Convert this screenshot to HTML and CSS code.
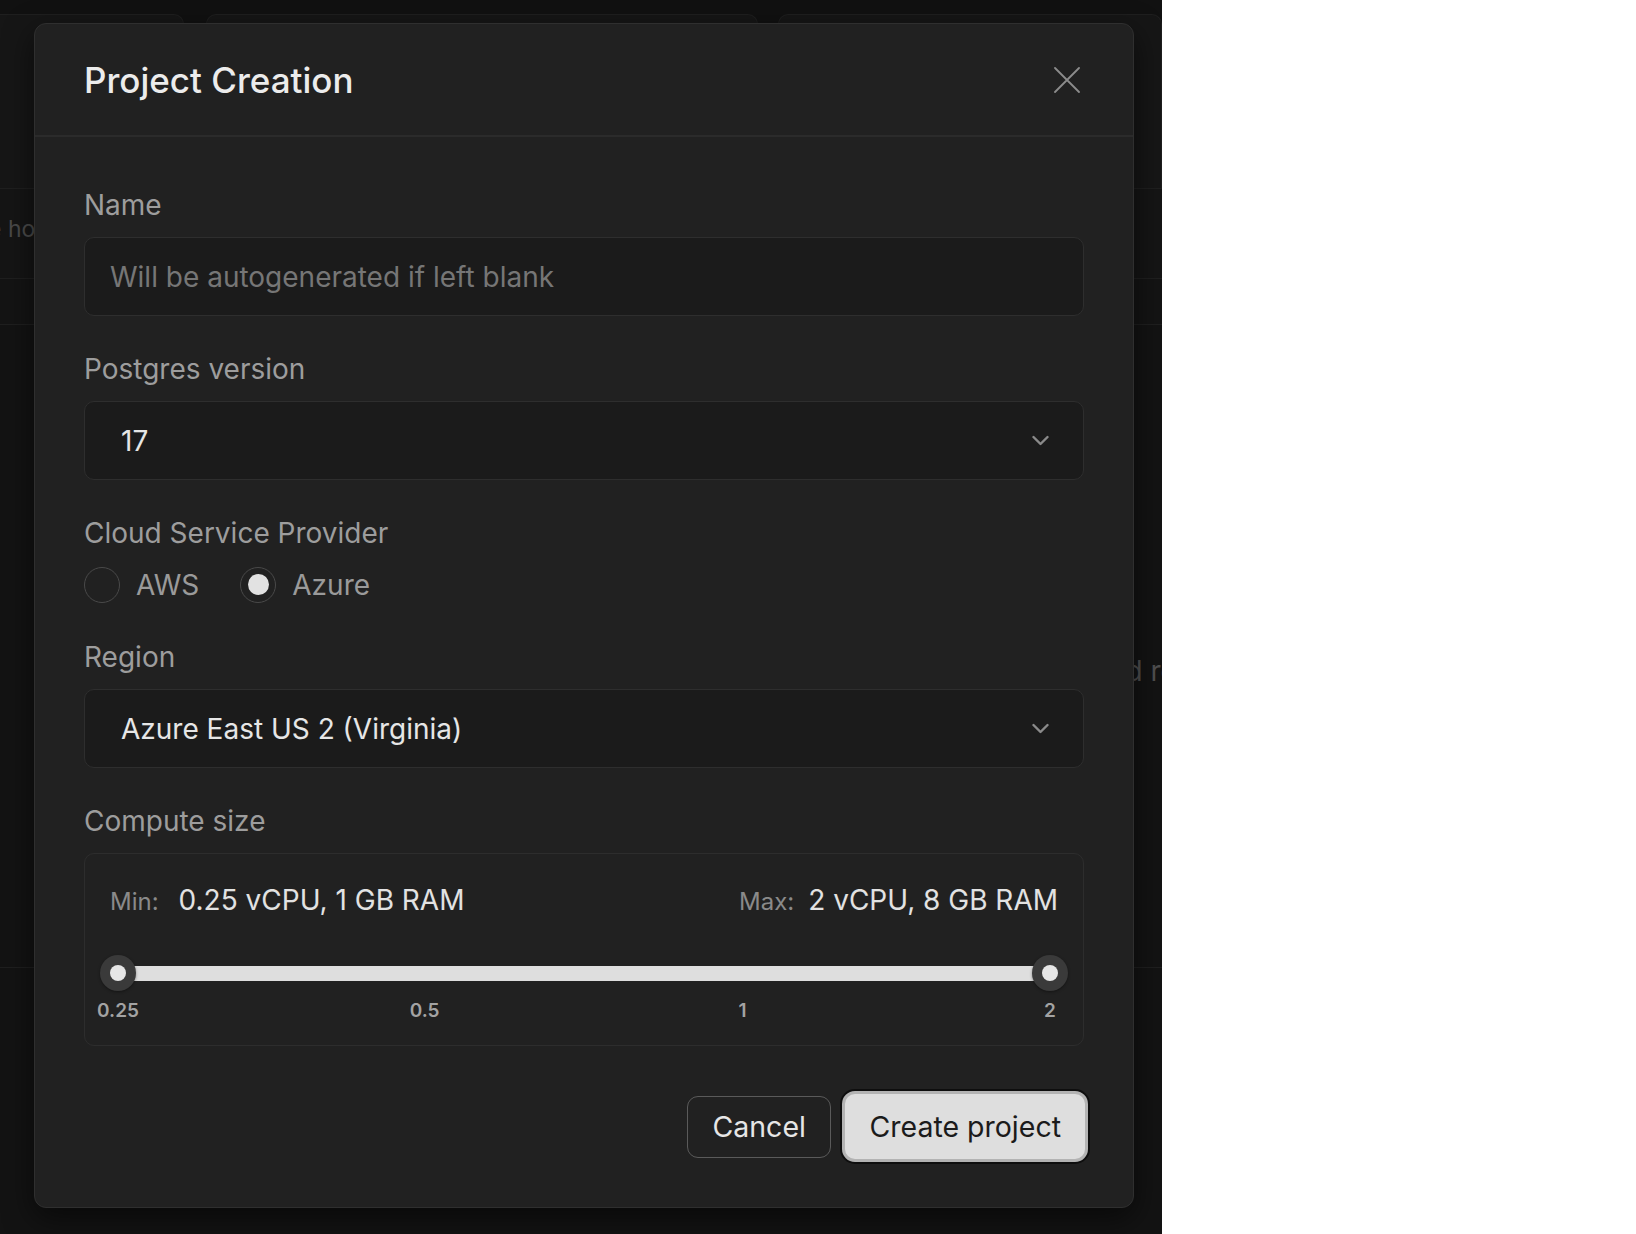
FILE: index.html
```html
<!DOCTYPE html>
<html lang="en">
<head>
<meta charset="utf-8">
<title>Project Creation</title>
<link rel="stylesheet" href="styles.css">
</head>
<body>
<div class="screen">
  <div class="backdrop">
    <div class="bg-tabs">
      <div class="bg-card c1"></div>
      <div class="bg-card c2"></div>
      <div class="bg-card c3"></div>
    </div>
    <div class="bg-row r1"><span class="bg-host">e host</span></div>
    <div class="bg-row r2"></div>
    <div class="bg-row r3"><span class="bg-empty">found results</span></div>
    <div class="bg-row r4"></div>
  </div>

  <div class="modal" role="dialog" aria-labelledby="modal-title">
    <div class="modal-header">
      <h2 class="modal-title" id="modal-title">Project Creation</h2>
      <button class="close-btn" aria-label="Close">
        <svg width="26" height="26" viewBox="0 0 26 26" fill="none" stroke="#8c8c8c" stroke-width="1.8" stroke-linecap="round">
          <path d="M1 1 L25 25 M25 1 L1 25"/>
        </svg>
      </button>
    </div>

    <div class="modal-body">
      <div class="field">
        <label class="field-label">Name</label>
        <div class="input"><span class="placeholder">Will be autogenerated if left blank</span></div>
      </div>

      <div class="field">
        <label class="field-label">Postgres version</label>
        <div class="select">
          <span class="select-value">17</span>
          <svg class="chevron" width="17" height="11" viewBox="0 0 17 11" fill="none" stroke="#8a8a8a" stroke-width="2.4" stroke-linecap="round" stroke-linejoin="round">
            <path d="M1.5 2 L8.5 9 L15.5 2"/>
          </svg>
        </div>
      </div>

      <div class="field">
        <label class="field-label">Cloud Service Provider</label>
        <div class="radio-group">
          <div class="radio-option">
            <span class="radio"></span>
            <span class="radio-text">AWS</span>
          </div>
          <div class="radio-option">
            <span class="radio checked"></span>
            <span class="radio-text">Azure</span>
          </div>
        </div>
      </div>

      <div class="field">
        <label class="field-label">Region</label>
        <div class="select">
          <span class="select-value">Azure East US 2 (Virginia)</span>
          <svg class="chevron" width="17" height="11" viewBox="0 0 17 11" fill="none" stroke="#8a8a8a" stroke-width="2.4" stroke-linecap="round" stroke-linejoin="round">
            <path d="M1.5 2 L8.5 9 L15.5 2"/>
          </svg>
        </div>
      </div>

      <div class="field">
        <label class="field-label">Compute size</label>
        <div class="compute-box">
          <div class="range-values">
            <div class="range-item">
              <span class="range-label min">Min:</span>
              <span class="range-value">0.25 vCPU, 1 GB RAM</span>
            </div>
            <div class="range-item">
              <span class="range-label max">Max:</span>
              <span class="range-value">2 vCPU, 8 GB RAM</span>
            </div>
          </div>
          <div class="slider">
            <div class="track"></div>
            <span class="thumb thumb-min"></span>
            <span class="thumb thumb-max"></span>
          </div>
          <div class="ticks">
            <span class="tick" style="left: 0%">0.25</span>
            <span class="tick" style="left: 32.9%">0.5</span>
            <span class="tick" style="left: 67%">1</span>
            <span class="tick" style="left: 100%">2</span>
          </div>
        </div>
      </div>

      <div class="modal-footer">
        <button class="btn btn-cancel">Cancel</button>
        <button class="btn btn-primary">Create project</button>
      </div>
    </div>
  </div>
</div>
</body>
</html>
```

FILE: styles.css
```css
* {
  box-sizing: border-box;
}

html,
body {
  margin: 0;
  padding: 0;
}

body {
  width: 1636px;
  height: 1234px;
  overflow: hidden;
  background: #ffffff;
  font-family: Inter, "Noto Sans", "Liberation Sans", sans-serif;
}

.screen {
  position: relative;
  width: 1162px;
  height: 1234px;
  overflow: hidden;
  background: #131313;
}

/* ---------- dimmed page behind the dialog ---------- */
.backdrop {
  width: 100%;
  height: 100%;
  background: #111111;
}

.bg-tabs {
  display: flex;
  gap: 22px;
  padding-top: 14px;
  margin-left: -10px;
  height: 188px;
}

.bg-card {
  height: 174px;
  background: #161616;
  border: 1px solid #1f1f1f;
  border-bottom: none;
  border-radius: 10px 10px 0 0;
}

.c1 { width: 202px; }
.c2 { width: 576px; }
.c3 { width: 400px; margin-left: -2px; }

.bg-row {
  border-top: 1px solid #1f1f1f;
  background: #141414;
}

.r1 {
  height: 90px;
  padding-top: 26px;
  background: #151515;
}

.r2 { height: 46px; }

.r3 {
  height: 643px;
  padding-top: 331px;
  padding-left: 1066px;
  background: #131313;
}

.r4 {
  height: 280px;
  background: #131313;
}

.bg-host {
  display: block;
  margin-left: -12px;
  font-size: 23px;
  line-height: 28px;
  color: #4a4a4a;
  white-space: nowrap;
}

.bg-empty {
  display: block;
  font-size: 28px;
  line-height: 30px;
  color: #4f4f4f;
  white-space: nowrap;
}

/* ---------- dialog ---------- */
.modal {
  position: absolute;
  left: 34px;
  top: 23px;
  width: 1100px;
  background: #212121;
  border: 1px solid #2f2f2f;
  border-radius: 12px;
  box-shadow: 0 10px 30px rgba(0, 0, 0, 0.55);
}

.modal-header {
  height: 113px;
  display: flex;
  align-items: center;
  justify-content: space-between;
  padding: 0 53px 0 49px;
  border-bottom: 2px solid #2b2b2b;
}

.modal-title {
  margin: 0;
  font-size: 35px;
  font-weight: 500;
  line-height: 42px;
  color: #ececec;
}

.close-btn {
  width: 26px;
  height: 26px;
  padding: 0;
  border: none;
  background: none;
  display: flex;
}

.modal-body {
  display: flex;
  flex-direction: column;
  gap: 37px;
  padding: 52px 49px 45px;
}

.field {
  display: flex;
  flex-direction: column;
  gap: 16px;
}

.field-label {
  font-size: 28px;
  line-height: 32px;
  color: #9d9d9d;
}

.input,
.select {
  height: 79px;
  display: flex;
  align-items: center;
  background: #1b1b1b;
  border: 1.5px solid #2e2e2e;
  border-radius: 10px;
  font-size: 28px;
}

.input {
  padding: 0 25px;
}

.placeholder {
  color: #767676;
}

.select {
  justify-content: space-between;
  padding: 0 34px 0 36px;
}

.select-value {
  color: #e6e6e6;
}

.chevron {
  display: block;
}

/* radios */
.radio-group {
  display: flex;
  align-items: center;
  gap: 41px;
  height: 39px;
}

.radio-option {
  display: flex;
  align-items: center;
  gap: 16px;
}

.radio {
  width: 36px;
  height: 36px;
  border-radius: 50%;
  border: 1.5px solid #494949;
  display: flex;
  align-items: center;
  justify-content: center;
}

.radio.checked::after {
  content: "";
  width: 21px;
  height: 21px;
  border-radius: 50%;
  background: #e2e2e2;
}

.radio-text {
  font-size: 28px;
  line-height: 32px;
  color: #9a9a9a;
}

/* compute size */
.compute-box {
  border: 1.5px solid #2d2d2d;
  border-radius: 10px;
  padding: 28px 15px 22px;
}

.range-values {
  display: flex;
  justify-content: space-between;
  padding: 0 10px;
  height: 36px;
}

.range-item {
  display: flex;
  align-items: baseline;
  line-height: 36px;
}

.range-label {
  font-size: 24px;
  color: #8a8a8a;
}

.range-label.min { margin-right: 20px; }
.range-label.max { margin-right: 14px; }

.range-value {
  font-size: 28px;
  color: #e2e2e2;
}

.slider {
  position: relative;
  height: 36px;
  margin-top: 37px;
}

.track {
  position: absolute;
  left: 18px;
  right: 18px;
  top: 11px;
  height: 15px;
  background: #dedede;
}

.thumb {
  position: absolute;
  top: 0;
  width: 36px;
  height: 36px;
  border-radius: 50%;
  background: #3a3a3a;
  box-shadow: 0 1px 3px rgba(0, 0, 0, 0.4);
  display: flex;
  align-items: center;
  justify-content: center;
}

.thumb::after {
  content: "";
  width: 16px;
  height: 16px;
  border-radius: 50%;
  background: #e6e6e6;
}

.thumb-min { left: 0; }
.thumb-max { right: 0; }

.ticks {
  position: relative;
  height: 24px;
  margin: 8px 18px 0;
}

.tick {
  position: absolute;
  top: 0;
  transform: translateX(-50%);
  font-size: 19px;
  font-weight: 600;
  line-height: 24px;
  color: #a3a3a3;
}

/* footer */
.modal-footer {
  display: flex;
  justify-content: flex-end;
  align-items: center;
  gap: 11px;
  margin-top: 8px;
  margin-right: -4px;
  height: 71px;
}

.btn {
  font-family: inherit;
  font-size: 28.5px;
  border-radius: 11px;
  cursor: pointer;
}

.btn-cancel {
  height: 62px;
  padding: 0 24.5px;
  background: transparent;
  border: 1.5px solid #5a5a5a;
  color: #e6e6e6;
}

.btn-primary {
  height: 71px;
  padding: 0 24px;
  background: #dedede;
  border: 3px solid #b3b3b3;
  color: #1b1b1b;
  border-radius: 13px;
  box-shadow: 0 0 0 2px #0e0e0e;
}
```
